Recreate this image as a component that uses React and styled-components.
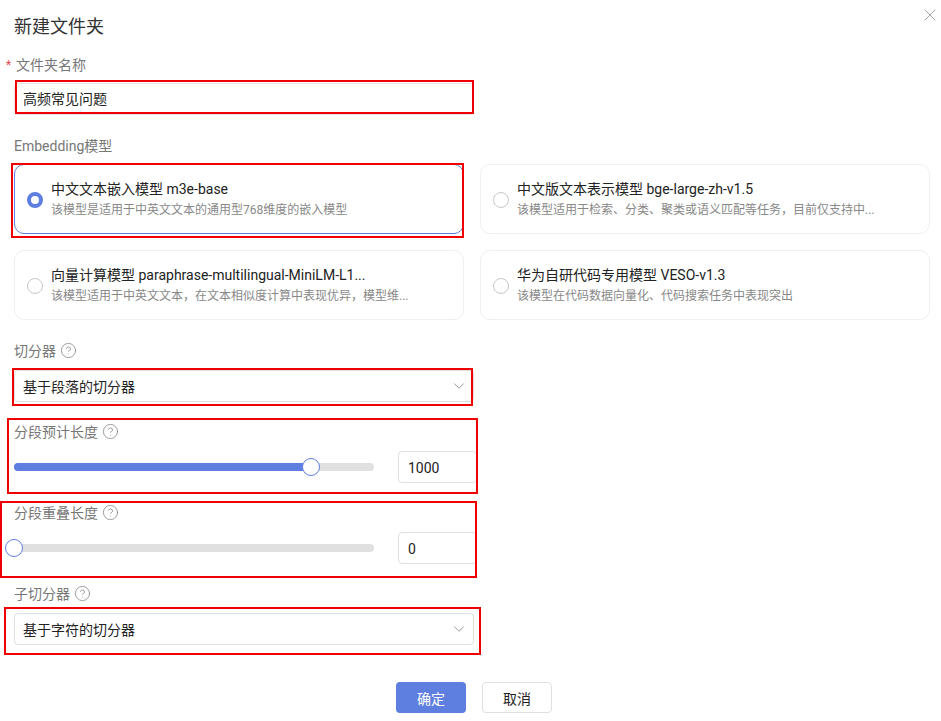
import styled, { createGlobalStyle } from "styled-components";
import { ChevronDown, CircleHelp, X } from "lucide-react";

const GlobalStyle = createGlobalStyle`
  html, body {
    margin: 0;
    padding: 0;
    background: #ffffff;
  }
  body {
    font-family: Roboto, "Noto Sans CJK SC", sans-serif;
  }
`;

const models = [
  {
    name: "中文文本嵌入模型 m3e-base",
    desc: "该模型是适用于中英文文本的通用型768维度的嵌入模型",
    active: true,
  },
  {
    name: "中文版文本表示模型 bge-large-zh-v1.5",
    desc: "该模型适用于检索、分类、聚类或语义匹配等任务，目前仅支持中...",
  },
  {
    name: "向量计算模型 paraphrase-multilingual-MiniLM-L1...",
    desc: "该模型适用于中英文文本，在文本相似度计算中表现优异，模型维...",
  },
  {
    name: "华为自研代码专用模型 VESO-v1.3",
    desc: "该模型在代码数据向量化、代码搜索任务中表现突出",
  },
];

const highlights = [
  { top: 80, left: 15, width: 459, height: 34 },
  { top: 163, left: 11, width: 453, height: 75 },
  { top: 368, left: 12, width: 461, height: 38 },
  { top: 418, left: 7, width: 471, height: 76 },
  { top: 501, left: 0, width: 477, height: 77 },
  { top: 607, left: 4, width: 477, height: 48 },
];

const Help = () => (
  <HelpIcon>
    <CircleHelp size={17} strokeWidth={1} />
  </HelpIcon>
);

const Range = ({ percent, value }) => (
  <SliderRow>
    <Track>
      <Fill style={{ width: `${percent}%` }} />
      <Thumb style={{ left: `${percent}%` }} />
    </Track>
    <NumberBox>{value}</NumberBox>
  </SliderRow>
);

const Select = ({ value }) => (
  <SelectBox>
    {value}
    <ChevronDown size={18} strokeWidth={1} color="#777777" />
  </SelectBox>
);

export default function App() {
  return (
    <Dialog>
      <GlobalStyle />
      <Title>新建文件夹</Title>
      <CloseButton>
        <X size={20} strokeWidth={0.9} />
      </CloseButton>

      <NameField>
        <Label>
          <Required>*</Required>文件夹名称
        </Label>
        <TextBox>高频常见问题</TextBox>
      </NameField>

      <ModelField>
        <Label>Embedding模型</Label>
        <ModelGrid>
          {models.map((m) => (
            <ModelCard key={m.name} $active={m.active}>
              <Radio $active={m.active} />
              <ModelText>
                <ModelName>{m.name}</ModelName>
                <ModelDesc>{m.desc}</ModelDesc>
              </ModelText>
            </ModelCard>
          ))}
        </ModelGrid>
      </ModelField>

      <Field $gap={21}>
        <Label>
          切分器
          <Help />
        </Label>
        <Select value="基于段落的切分器" />
      </Field>

      <Field $gap={20}>
        <Label>
          分段预计长度
          <Help />
        </Label>
        <Range percent={82.5} value="1000" />
      </Field>

      <Field $gap={20}>
        <Label>
          分段重叠长度
          <Help />
        </Label>
        <Range percent={0} value="0" />
      </Field>

      <Field $gap={20}>
        <Label>
          子切分器
          <Help />
        </Label>
        <Select value="基于字符的切分器" />
      </Field>

      <Footer>
        <PrimaryButton>确定</PrimaryButton>
        <SecondaryButton>取消</SecondaryButton>
      </Footer>

      {highlights.map((h) => (
        <Highlight key={h.top} style={h} />
      ))}
    </Dialog>
  );
}

const Dialog = styled.div`
  position: relative;
  width: 941px;
  height: 721px;
  padding: 15px 11px 0 14px;
  box-sizing: border-box;
  overflow: hidden;
  background: #ffffff;
`;

const Title = styled.h2`
  margin: 0;
  font-size: 18px;
  line-height: 24px;
  font-weight: 400;
  color: #333333;
`;

const CloseButton = styled.div`
  position: absolute;
  top: 5px;
  right: 1px;
  color: #888888;
  line-height: 0;
`;

const Label = styled.div`
  display: flex;
  align-items: center;
  height: 20px;
  font-size: 14px;
  line-height: 20px;
  color: #777777;
`;

const Required = styled.span`
  width: 9px;
  margin-left: -8px;
  margin-right: 1px;
  color: #e5484d;
  font-size: 12px;
`;

const HelpIcon = styled.span`
  display: inline-flex;
  margin-left: 4px;
  margin-top: -2px;
  color: #777777;
`;

const NameField = styled.div`
  width: 460px;
  margin-top: 16px;
`;

const TextBox = styled.div`
  display: flex;
  align-items: center;
  height: 32px;
  margin-top: 8px;
  padding: 0 8px 2px;
  box-sizing: border-box;
  border: 1px solid #e4e4e4;
  border-radius: 4px;
  font-size: 14px;
  color: #222222;
`;

const ModelField = styled.div`
  margin-top: 21px;
`;

const ModelGrid = styled.div`
  display: grid;
  grid-template-columns: 450px 450px;
  grid-auto-rows: 70px;
  gap: 16px;
  margin-top: 8px;
`;

const ModelCard = styled.div`
  display: flex;
  align-items: center;
  gap: 8px;
  padding: 0 12px;
  box-sizing: border-box;
  min-width: 0;
  border: 1px solid ${(p) => (p.$active ? "#5f7fe0" : "#f0f0f0")};
  border-radius: 10px;
`;

const Radio = styled.span`
  flex: none;
  width: 16px;
  height: 16px;
  margin-top: 2px;
  box-sizing: border-box;
  border-radius: 50%;
  border: ${(p) => (p.$active ? "4px solid #5f7fe0" : "1px solid #c8c8c8")};
  background: #ffffff;
`;

const ModelText = styled.div`
  min-width: 0;
  flex: 1;
`;

const ModelName = styled.div`
  font-size: 14px;
  line-height: 20px;
  color: #222222;
  white-space: nowrap;
`;

const ModelDesc = styled.div`
  margin-top: 2px;
  font-size: 12px;
  line-height: 18px;
  color: #888888;
  white-space: nowrap;
`;

const Field = styled.div`
  width: 460px;
  margin-top: ${(p) => p.$gap}px;
`;

const SelectBox = styled.div`
  display: flex;
  align-items: center;
  justify-content: space-between;
  height: 32px;
  margin-top: 9px;
  padding: 0 5px 0 8px;
  box-sizing: border-box;
  border: 1px solid #e0e0e0;
  border-radius: 4px;
  font-size: 14px;
  color: #222222;
`;

const SliderRow = styled.div`
  display: flex;
  align-items: center;
  gap: 24px;
  margin-top: 9px;
`;

const Track = styled.div`
  position: relative;
  flex: none;
  width: 360px;
  height: 8px;
  border-radius: 4px;
  background: #e0e0e0;
`;

const Fill = styled.div`
  height: 100%;
  border-radius: 4px;
  background: #5f7fe0;
`;

const Thumb = styled.span`
  position: absolute;
  top: 50%;
  width: 18px;
  height: 18px;
  box-sizing: border-box;
  transform: translate(-50%, -50%);
  border: 1px solid #5f7fe0;
  border-radius: 50%;
  background: #ffffff;
`;

const NumberBox = styled.div`
  flex: none;
  display: flex;
  align-items: center;
  width: 79px;
  height: 32px;
  padding: 2px 9px 0;
  box-sizing: border-box;
  border: 1px solid #e0e0e0;
  border-radius: 4px;
  font-size: 14px;
  color: #222222;
`;

const Footer = styled.div`
  display: flex;
  gap: 16px;
  margin-top: 37px;
  margin-left: 382px;
`;

const PrimaryButton = styled.div`
  display: flex;
  align-items: center;
  justify-content: center;
  width: 70px;
  height: 31px;
  border-radius: 4px;
  background: #5f7fe0;
  color: #ffffff;
  font-size: 14px;
`;

const SecondaryButton = styled(PrimaryButton)`
  box-sizing: border-box;
  border: 1px solid #e0e0e0;
  background: #ffffff;
  color: #222222;
`;

const Highlight = styled.div`
  position: absolute;
  box-sizing: border-box;
  border: 2px solid #f00000;
  pointer-events: none;
`;
